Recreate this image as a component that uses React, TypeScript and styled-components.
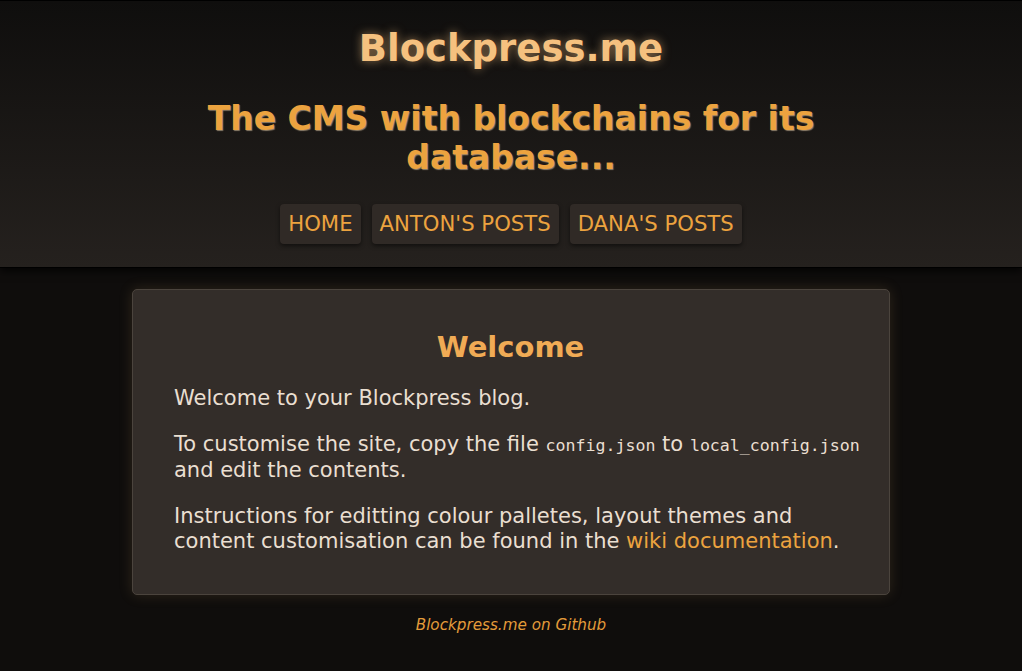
import styled, { createGlobalStyle } from 'styled-components';

const GlobalStyle = createGlobalStyle`
  html, body {
    margin: 0;
    padding: 0;
    background: #0f0d0c;
    font-family: 'DejaVu Sans', sans-serif;
  }
`;

const colors = {
  orange: '#eca33f',
  title: '#f5c17f',
  heading: '#f0ab55',
  text: '#eadfd1',
  card: '#332d29',
  button: '#302a26',
};

function App() {
  return (
    <>
      <GlobalStyle />
      <StyledHeader>
        <StyledTitle>Blockpress.me</StyledTitle>
        <StyledTagline>The CMS with blockchains for its database...</StyledTagline>
        <StyledNav>
          <NavButton href="#">HOME</NavButton>
          <NavButton href="#">ANTON'S POSTS</NavButton>
          <NavButton href="#">DANA'S POSTS</NavButton>
        </StyledNav>
      </StyledHeader>
      <StyledMain>
        <StyledCard>
          <h2>Welcome</h2>
          <p>Welcome to your Blockpress blog.</p>
          <p>
            To customise the site, copy the file <code>config.json</code> to{' '}
            <code>local_config.json</code> and edit the contents.
          </p>
          <p>
            Instructions for editting colour palletes, layout themes and content
            customisation can be found in the <a href="#">wiki documentation</a>.
          </p>
        </StyledCard>
        <StyledFooter href="#">Blockpress.me on Github</StyledFooter>
      </StyledMain>
    </>
  );
}

export default App;

const StyledHeader = styled.header`
  display: flex;
  flex-direction: column;
  align-items: center;
  padding: 26px 0 23px;
  background: linear-gradient(to bottom, #0f0e0d, #25211e);
  border-top: 1px solid #000;
  border-bottom: 1px solid #000;
  box-shadow: 0 3px 8px rgba(0, 0, 0, 0.8);
`;

const StyledTitle = styled.h1`
  margin: 0;
  font-size: 37px;
  line-height: 44px;
  font-weight: bold;
  color: ${colors.title};
  text-shadow: 0 0 10px rgba(245, 193, 127, 0.55);
`;

const StyledTagline = styled.h2`
  margin: 28px 0 0;
  width: 640px;
  text-align: center;
  font-size: 33px;
  line-height: 39px;
  font-weight: bold;
  color: ${colors.orange};
  text-shadow: 1px 1px 1px rgba(255, 230, 190, 0.5);
`;

const StyledNav = styled.nav`
  display: flex;
  gap: 11px;
  margin-top: 27px;
`;

const NavButton = styled.a`
  display: block;
  padding: 0 8px;
  height: 40px;
  line-height: 40px;
  font-size: 21.2px;
  color: ${colors.orange};
  text-decoration: none;
  background: ${colors.button};
  border-radius: 4px;
  box-shadow: 0 2px 4px rgba(0, 0, 0, 0.5);
`;

const StyledMain = styled.main`
  display: flex;
  flex-direction: column;
  align-items: center;
  padding-top: 21px;
`;

const StyledCard = styled.section`
  box-sizing: border-box;
  width: 758px;
  padding: 40px 24px 40px 41px;
  background: ${colors.card};
  border: 1px solid #4b443d;
  border-radius: 5px;
  box-shadow: 0 0 14px rgba(190, 150, 90, 0.18);
  color: ${colors.text};
  font-size: 21px;
  line-height: 25px;

  h2 {
    margin: 0 18px 22px 0;
    text-align: center;
    font-size: 29px;
    line-height: 34px;
    color: ${colors.heading};
  }

  p {
    margin: 0 0 21px;
  }

  p:last-child {
    margin-bottom: 0;
  }

  code {
    font-family: 'DejaVu Sans Mono', monospace;
    font-size: 16.6px;
  }

  a {
    color: ${colors.orange};
    text-decoration: none;
  }
`;

const StyledFooter = styled.a`
  margin-top: 21px;
  font-size: 15.2px;
  font-style: italic;
  color: #e39b3a;
  text-decoration: none;
`;
